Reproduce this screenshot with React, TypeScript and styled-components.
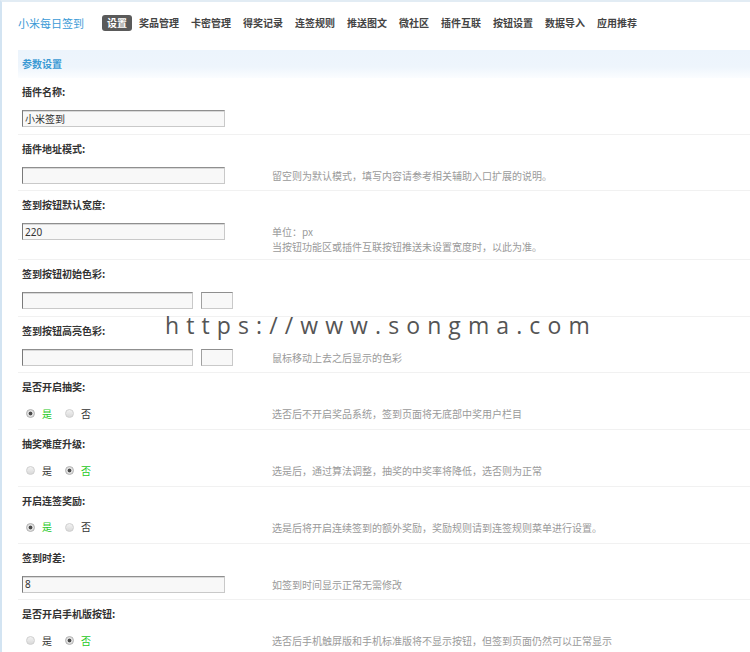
import React from 'react';
import styled, { createGlobalStyle } from 'styled-components';

const GlobalStyle = createGlobalStyle`
  html, body {
    margin: 0;
    padding: 0;
    background: #fff;
  }
  body {
    font-family: 'Noto Sans', 'Noto Sans CJK SC', sans-serif;
    color: #333;
  }
`;

const CJK = `'Noto Sans CJK SC', 'Noto Sans', sans-serif`;

type Field =
  | { kind: 'text'; value: string }
  | { kind: 'color' }
  | { kind: 'radio'; checked: 'yes' | 'no' };

interface IRow {
  label: string;
  field: Field;
  help?: string[];
}

const tabs = [
  '设置',
  '奖品管理',
  '卡密管理',
  '得奖记录',
  '连签规则',
  '推送图文',
  '微社区',
  '插件互联',
  '按钮设置',
  '数据导入',
  '应用推荐',
];

const rows: IRow[] = [
  { label: '插件名称:', field: { kind: 'text', value: '小米签到' } },
  {
    label: '插件地址模式:',
    field: { kind: 'text', value: '' },
    help: ['留空则为默认模式，填写内容请参考相关辅助入口扩展的说明。'],
  },
  {
    label: '签到按钮默认宽度:',
    field: { kind: 'text', value: '220' },
    help: ['单位：px', '当按钮功能区或插件互联按钮推送未设置宽度时，以此为准。'],
  },
  { label: '签到按钮初始色彩:', field: { kind: 'color' } },
  {
    label: '签到按钮高亮色彩:',
    field: { kind: 'color' },
    help: ['鼠标移动上去之后显示的色彩'],
  },
  {
    label: '是否开启抽奖:',
    field: { kind: 'radio', checked: 'yes' },
    help: ['选否后不开启奖品系统，签到页面将无底部中奖用户栏目'],
  },
  {
    label: '抽奖难度升级:',
    field: { kind: 'radio', checked: 'no' },
    help: ['选是后，通过算法调整，抽奖的中奖率将降低，选否则为正常'],
  },
  {
    label: '开启连签奖励:',
    field: { kind: 'radio', checked: 'yes' },
    help: ['选是后将开启连续签到的额外奖励，奖励规则请到连签规则菜单进行设置。'],
  },
  {
    label: '签到时差:',
    field: { kind: 'text', value: '8' },
    help: ['如签到时间显示正常无需修改'],
  },
  {
    label: '是否开启手机版按钮:',
    field: { kind: 'radio', checked: 'no' },
    help: ['选否后手机触屏版和手机标准版将不显示按钮，但签到页面仍然可以正常显示'],
  },
];

const RadioGroup: React.FC<{ checked: 'yes' | 'no' }> = ({ checked }) => (
  <Radios>
    <RadioDot $on={checked === 'yes'} />
    <RadioLabel $on={checked === 'yes'}>是</RadioLabel>
    <RadioDot $on={checked === 'no'} />
    <RadioLabel $on={checked === 'no'}>否</RadioLabel>
  </Radios>
);

const FieldCell: React.FC<{ field: Field }> = ({ field }) => {
  if (field.kind === 'text') {
    return <TextInput readOnly value={field.value} />;
  }
  if (field.kind === 'color') {
    return (
      <>
        <ColorInput readOnly value="" />
        <Swatch />
      </>
    );
  }
  return <RadioGroup checked={field.checked} />;
};

const App: React.FC = () => {
  return (
    <Page>
      <GlobalStyle />
      <Header>
        <Brand>小米每日签到</Brand>
        <Nav>
          {tabs.map((t, i) => (
            <Tab key={t} $active={i === 0}>
              {t}
            </Tab>
          ))}
        </Nav>
      </Header>

      <Main>
        <SectionBar>参数设置</SectionBar>
        {rows.map((row) => (
          <Row key={row.label}>
            <Label>{row.label}</Label>
            <FieldLine>
              <FieldCol>
                <FieldCell field={row.field} />
              </FieldCol>
              {row.help && (
                <Help>
                  {row.help.map((h) => (
                    <div key={h}>{h}</div>
                  ))}
                </Help>
              )}
            </FieldLine>
          </Row>
        ))}
      </Main>

      {/* watermark lies over the form */}
      <Watermark>https://www.songma.com</Watermark>
    </Page>
  );
};

const Page = styled.div`
  position: relative;
  width: 750px;
  height: 652px;
  overflow: hidden;
  box-sizing: border-box;
  border-left: 2px solid #d3e4f2;
  border-top: 2px solid #e2ecf4;
  background: #fff;
`;

const Header = styled.div`
  display: flex;
  align-items: center;
  height: 42px;
  padding-left: 16px;
`;

const Brand = styled.div`
  font-family: ${CJK};
  font-size: 11px;
  line-height: 16px;
  color: #3a9ad6;
  margin-right: 18px;
`;

const Nav = styled.div`
  display: flex;
  align-items: center;
  gap: 2px;
`;

const Tab = styled.span<{ $active?: boolean }>`
  font-family: ${CJK};
  font-size: 10px;
  font-weight: 700;
  line-height: 16px;
  padding: 0 5px;
  border-radius: 3px;
  color: ${(p) => (p.$active ? '#fff' : '#444')};
  background: ${(p) => (p.$active ? '#5a5a5a' : 'transparent')};
`;

const Main = styled.div`
  padding: 6px 0 0 16px;
`;

const SectionBar = styled.div`
  height: 28px;
  line-height: 28px;
  padding-left: 4px;
  font-family: ${CJK};
  font-size: 10px;
  font-weight: 700;
  color: #3b9ad4;
  background: linear-gradient(#ecf4fc 0%, #eef5fc 60%, #fbfdff 100%);
`;

const Row = styled.div`
  box-sizing: border-box;
  padding: 6px 0 6.7px 4px;
  border-bottom: 1px solid #f1f1f1;
`;

const Label = styled.div`
  font-family: ${CJK};
  font-size: 10px;
  font-weight: 700;
  line-height: 16px;
  color: #333;
  margin-bottom: 10px;
`;

const FieldLine = styled.div`
  display: flex;
  align-items: flex-start;
`;

const FieldCol = styled.div`
  width: 250px;
  flex-shrink: 0;
  display: flex;
  align-items: center;
  min-height: 17px;
`;

const TextInput = styled.input`
  box-sizing: border-box;
  width: 203px;
  height: 17px;
  padding: 0 2px;
  margin: 0;
  border: 1px solid #c9c9c9;
  border-top-color: #8f8f8f;
  border-left-color: #7a7a7a;
  box-shadow: inset 0 1px 0 #d8d8d8;
  background: #f8f8f8;
  font-family: 'Noto Sans', 'Noto Sans CJK SC', sans-serif;
  font-size: 10px;
  color: #333;
  outline: none;
`;

const ColorInput = styled(TextInput)`
  width: 171px;
`;

const Swatch = styled.span`
  box-sizing: border-box;
  width: 32px;
  height: 17px;
  margin-left: 8px;
  border: 1px solid #c9c9c9;
  border-top-color: #8f8f8f;
  border-left-color: #a0a0a0;
  background: #f8f8f8;
`;

const Radios = styled.div`
  display: flex;
  align-items: center;
  height: 17px;
  padding-left: 4px;
`;

const RadioDot = styled.span<{ $on?: boolean }>`
  box-sizing: border-box;
  width: 9px;
  height: 9px;
  border-radius: 50%;
  border: 1px solid ${(p) => (p.$on ? '#b0b0b0' : '#cfcfcf')};
  background: ${(p) =>
    p.$on
      ? 'radial-gradient(circle, #4a4a4a 0, #4a4a4a 1.6px, #dcdcdc 2.2px, #eaeaea 100%)'
      : 'linear-gradient(#f2f2f2, #d9d9d9)'};
`;

const RadioLabel = styled.span<{ $on?: boolean }>`
  font-family: ${CJK};
  font-size: 10px;
  line-height: 14px;
  margin: 0 13px 0 7px;
  color: ${(p) => (p.$on ? '#1ec81e' : '#333')};
`;

// two-line help may reach a little past the input, as in the original
const Help = styled.div`
  padding-top: 1px;
  margin-bottom: -2px;
  font-family: ${CJK};
  font-size: 10px;
  line-height: 15px;
  color: #9a9a9a;
`;

const Watermark = styled.div`
  position: absolute;
  left: 163px;
  top: 308px;
  font-family: 'Open Sans', 'DejaVu Sans', sans-serif;
  font-size: 23px;
  letter-spacing: 7.1px;
  line-height: 30px;
  color: #555;
  white-space: nowrap;
  pointer-events: none;
`;

export default App;
